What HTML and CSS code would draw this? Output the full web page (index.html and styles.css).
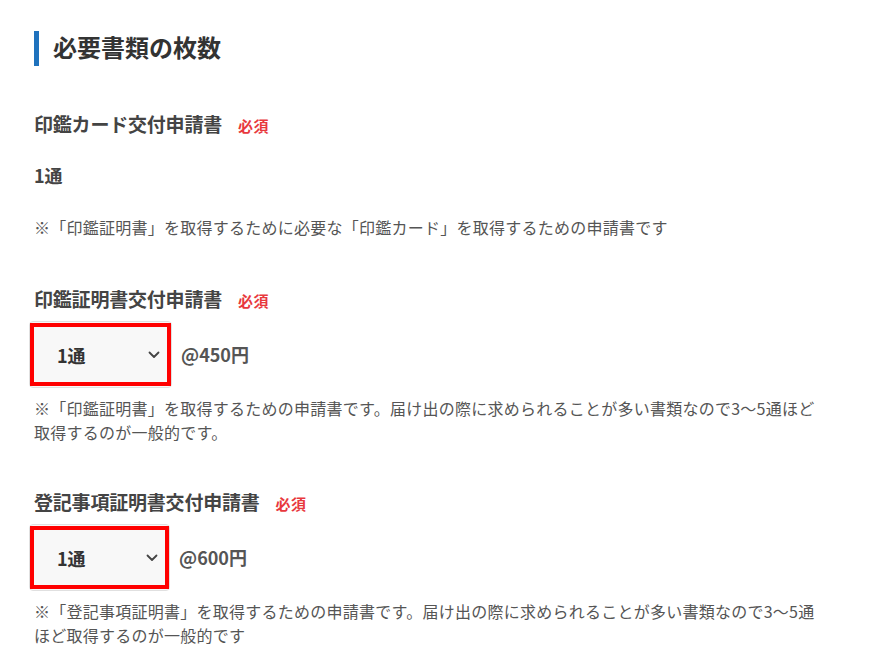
FILE: index.html
```html
<!DOCTYPE html>
<html lang="ja">
<head>
<meta charset="utf-8">
<title>必要書類の枚数</title>
<link rel="stylesheet" href="styles.css">
</head>
<body>
<div class="page">
  <h2 class="title">必要書類の枚数</h2>

  <div class="item item-first">
    <div class="label">印鑑カード交付申請書<span class="req">必須</span></div>
    <div class="value">1通</div>
    <p class="note note-first">※「印鑑証明書」を取得するために必要な「印鑑カード」を取得するための申請書です</p>
  </div>

  <div class="item">
    <div class="label">印鑑証明書交付申請書<span class="req">必須</span></div>
    <div class="row">
      <div class="select select-wide">
        <span class="sel-text">1通</span>
        <svg class="chev" width="12" height="8" viewBox="0 0 12 8"><path d="M1.5 1.5 L6 6 L10.5 1.5" fill="none" stroke="#444" stroke-width="1.8" stroke-linecap="round" stroke-linejoin="round"/></svg>
        <span class="mark"></span>
      </div>
      <span class="price">@450円</span>
    </div>
    <p class="note">※「印鑑証明書」を取得するための申請書です。届け出の際に求められることが多い書類なので3〜5通ほど取得するのが一般的です。</p>
  </div>

  <div class="item item-last">
    <div class="label">登記事項証明書交付申請書<span class="req">必須</span></div>
    <div class="row">
      <div class="select select-narrow">
        <span class="sel-text">1通</span>
        <svg class="chev" width="12" height="8" viewBox="0 0 12 8"><path d="M1.5 1.5 L6 6 L10.5 1.5" fill="none" stroke="#444" stroke-width="1.8" stroke-linecap="round" stroke-linejoin="round"/></svg>
        <span class="mark"></span>
      </div>
      <span class="price">@600円</span>
    </div>
    <p class="note">※「登記事項証明書」を取得するための申請書です。届け出の際に求められることが多い書類なので3〜5通ほど取得するのが一般的です</p>
  </div>
</div>
</body>
</html>
```

FILE: styles.css
```css
html, body {
  margin: 0;
  padding: 0;
  background: #ffffff;
}

body {
  font-family: "Noto Sans CJK JP", "Noto Sans", sans-serif;
  color: #444;
}

.page {
  padding: 31px 0 0 34px;
  width: 792px;
}

.title {
  margin: 0;
  border-left: 5px solid #1f72bd;
  padding: 0 0 4px 14px;
  font-size: 24px;
  line-height: 31px;
  font-weight: 700;
  color: #333;
}

.item {
  margin-top: 47px;
}

.item-first {
  margin-top: 45px;
}

.item-last {
  margin-top: 45px;
}

.label {
  font-size: 19px;
  letter-spacing: -0.2px;
  line-height: 26px;
  font-weight: 700;
  color: #444;
}

.req {
  margin-left: 16px;
  font-size: 15px;
  letter-spacing: 0.5px;
  color: #e8383d;
  font-weight: 700;
}

.value {
  margin-top: 23px;
  font-size: 18px;
  line-height: 26px;
  font-weight: 700;
  color: #444;
}

.note {
  margin: 26px 0 0;
  font-size: 16px;
  letter-spacing: 0.25px;
  line-height: 24px;
  color: #555;
}

.note-first {
  margin-top: 27px;
}

.row {
  margin-top: 7px;
  margin-left: -5px;
  display: flex;
  align-items: center;
  gap: 9px;
}

.row + .note {
  margin-top: 8px;
}

.select {
  position: relative;
  height: 67px;
  box-sizing: border-box;
  background: #f8f8f8;
  border: 1px solid #e0e0e0;
  border-radius: 4px;
  display: flex;
  align-items: center;
  justify-content: space-between;
  padding: 0 11px 0 27px;
}

.select-wide {
  width: 143px;
}

.select-narrow {
  width: 141px;
}

.sel-text {
  font-size: 18px;
  font-weight: 700;
  color: #333;
}

.chev {
  display: block;
}

.mark {
  position: absolute;
  top: 1px;
  bottom: 1px;
  left: 0;
  right: 0;
  border: 4px solid #ff0000;
}

.price {
  font-size: 18px;
  font-weight: 700;
  color: #555;
  position: relative;
  top: -1px;
}
```
